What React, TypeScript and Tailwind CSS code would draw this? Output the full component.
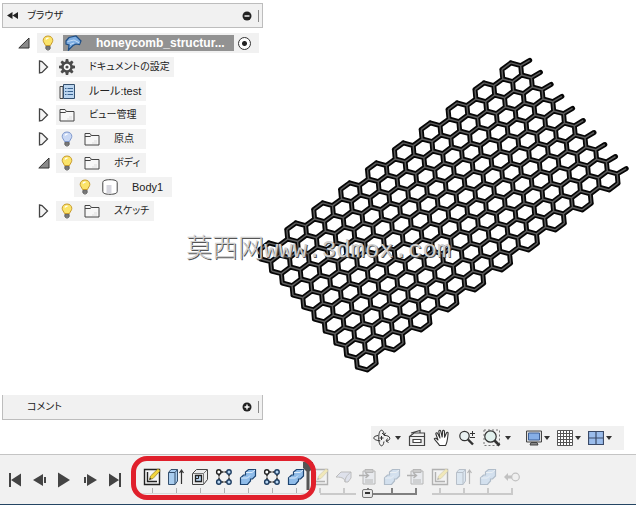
import React from "react";

const Bulb = ({ off = false }: { off?: boolean }) => (
  <svg width="14" height="16" viewBox="0 0 14 16" className="shrink-0">
    <path
      d="M7 1C4 1 2.2 3 2.2 5.4c0 2 1.6 3 2.3 5.1h5c.7-2.100 2.300-3.100 2.300-5.100C11.800 3 10 1 7 1z"
      fill={off ? "#c9d8f4" : "#fbe46a"}
      stroke={off ? "#7d97cc" : "#c79a2c"}
    />
    <path d="M5 4.500c.5-1 1.500-1.500 2.500-1.300" stroke="#fff" strokeWidth="1.400" fill="none" />
    <path d="M4.800 11.500h4.400v2L8 15H6l-1.200-1.500z" fill="#9a9a9a" stroke="#555" strokeWidth=".8" />
    <path d="M5 13h4" stroke="#444" strokeWidth=".8" />
  </svg>
);

const Folder = () => (
  <svg width="16" height="14" viewBox="0 0 16 14" className="shrink-0">
    <path d="M1 13V1.500h5l1.500 2H15V13zM1 4.500h5l1.500-1" fill="#f7f7f7" stroke="#444" />
    <path d="M8 11h5M10 9h3" stroke="#ddd" />
  </svg>
);

const Gear = () => (
  <svg width="16" height="16" viewBox="-8 -8 16 16" className="shrink-0">
    {[0, 45, 90, 135, 180, 225, 270, 315].map((a) => (
      <path key={a} d="M-1.700-5L-1.200-8h2.400L1.700-5z" fill="#4b4b4b" transform={`rotate(${a})`} />
    ))}
    <circle r="4.500" fill="#fff" stroke="#4b4b4b" strokeWidth="2.400" />
    <circle r="1.600" fill="#4b4b4b" />
  </svg>
);

const Rules = () => (
  <svg width="16" height="15" viewBox="0 0 16 15" className="shrink-0">
    <path d="M1 14.500V2.500h3v12z" fill="#eee" stroke="#444" />
    <path d="M4.500.5h11v14h-11z" fill="#bcd6f0" stroke="#35506e" />
    <path d="M6 4.500h1.500m1 0h5.500M6 7.500h1.500m1 0h5.500M6 10.500h1.500m1 0h5.500" stroke="#3a6390" />
  </svg>
);

const Cylinder = () => (
  <svg width="16" height="16" viewBox="0 0 16 16" className="shrink-0">
    <path d="M.8 3.500C.8 1.500 4 .7 8 .7s7.200.8 7.200 2.800v9c0 2-3.200 2.800-7.200 2.800S.8 14.500.8 12.500z" fill="#fff" stroke="#444" />
    <path d="M4.500 6h5v8h-5z" fill="#d6d6de" />
  </svg>
);

const DocIcon = () => (
  <svg width="17" height="16" viewBox="0 0 17 16" className="shrink-0">
    <path d="M1 6l3-3.500L11 1l5 5-1.500 3.500L11 9l-3 1.500L3.500 15 4 10 1 9z" fill="#7eaee3" stroke="#1f4f86" strokeWidth="1.200" />
    <path d="M2.500 6.500L9 5l5.500 3M5 9.500L9 8" stroke="#c5dcf4" fill="none" />
  </svg>
);

const Expander = ({ open }: { open?: boolean }) =>
  open ? (
    <svg width="12" height="12" viewBox="0 0 12 12">
      <path d="M11 1v10H.8z" fill="#8a8a8a" stroke="#333" />
    </svg>
  ) : (
    <svg width="12" height="14" viewBox="0 0 12 14">
      <path d="M1.500 1l2.500.5 5.500 5.500-5.500 5.500-2.500.5z" fill="#f4f4f4" stroke="#444" strokeWidth="1.300" />
    </svg>
  );

const PlusMinus = ({ plus }: { plus?: boolean }) => (
  <svg width="10" height="10" viewBox="0 0 10 10">
    <circle cx="5" cy="5" r="4.500" fill="#222" />
    <path d={plus ? "M2.500 5h5M5 2.500v5" : "M2.500 5h5"} stroke="#fff" strokeWidth="1.400" />
  </svg>
);

const Caret = () => (
  <svg width="6" height="4" viewBox="0 0 6 4" className="shrink-0">
    <path d="M0 0h6L3 4z" fill="#333" />
  </svg>
);

type Row = {
  label: string;
  indent: string;
  width: string;
  text: string;
  state?: "open" | "closed";
  bulb?: "on" | "off";
  icon: React.ReactNode;
};

const rows: Row[] = [
  { label: "ドキュメントの設定", indent: "pl-9", width: "w-[118px]", text: "text-[10px]", state: "closed", icon: <Gear /> },
  { label: "ルール:test", indent: "pl-9", width: "w-[90px]", text: "text-[11px]", icon: <Rules /> },
  { label: "ビュー管理", indent: "pl-9", width: "w-[90px]", text: "text-[10px]", state: "closed", icon: <Folder /> },
  { label: "原点", indent: "pl-9", width: "w-[90px]", text: "text-[10px]", state: "closed", bulb: "off", icon: <Folder /> },
  { label: "ボディ", indent: "pl-9", width: "w-[90px]", text: "text-[10px]", state: "open", bulb: "on", icon: <Folder /> },
  { label: "Body1", indent: "pl-[54px]", width: "w-[98px]", text: "text-[11px]", bulb: "on", icon: <Cylinder /> },
  { label: "スケッチ", indent: "pl-9", width: "w-[98px]", text: "text-[10px]", state: "closed", bulb: "on", icon: <Folder /> },
];

const U = [18.8, -4];
const V = [10.72, 12.03];

function latticePath() {
  const seen = new Set<string>();
  let d = "";
  const corners = [
    [(U[0] + V[0]) / 3, (U[1] + V[1]) / 3],
    [(2 * V[0] - U[0]) / 3, (2 * V[1] - U[1]) / 3],
    [(V[0] - 2 * U[0]) / 3, (V[1] - 2 * U[1]) / 3],
    [-(U[0] + V[0]) / 3, -(U[1] + V[1]) / 3],
    [-(2 * V[0] - U[0]) / 3, -(2 * V[1] - U[1]) / 3],
    [-(V[0] - 2 * U[0]) / 3, -(V[1] - 2 * U[1]) / 3],
  ];
  for (let c = 0; c < 19; c++) {
    const odd = c % 2;
    for (let r = 0; r < (odd ? 9 : 10); r++) {
      const x = 269.8 + c * 13.44 + (odd ? V[0] / 2 : 0) + r * V[0];
      const y = 252.3 - c * 10 + (odd ? V[1] / 2 : 0) + r * V[1];
      corners.forEach((p, i) => {
        const q = corners[(i + 1) % 6];
        const key = `${Math.round((2 * x + p[0] + q[0]) / 4)},${Math.round((2 * y + p[1] + q[1]) / 4)}`;
        if (seen.has(key)) return;
        seen.add(key);
        d += `M${(x + p[0]).toFixed(1)} ${(y + p[1]).toFixed(1)}L${(x + q[0]).toFixed(1)} ${(y + q[1]).toFixed(1)}`;
      });
      if (c === 18) {
        d += `M${(x + 9).toFixed(1)} ${(y - 6.7).toFixed(1)}L${(x + 18).toFixed(1)} ${(y - 12).toFixed(1)}`;
      }
    }
  }
  return d;
}

const lattice = latticePath();

const SketchIcon = () => (
  <svg width="18" height="18" viewBox="0 0 18 18">
    <path d="M1.500 1.500h15v15h-15z" fill="#f5f5f5" stroke="#222" strokeWidth="1.400" />
    <path d="M4.500 4v9.500H14" stroke="#222" strokeWidth="1.400" fill="none" />
    <path d="M6.500 11.500l1-3.500L15 .8l2.200 2L10 10.500z" fill="#f4d63c" stroke="#8d7a21" strokeWidth=".7" />
    <path d="M6.200 12l.8-2.500 1.500 1.500z" fill="#333" />
  </svg>
);
const ExtrudeIcon = () => (
  <svg width="18" height="18" viewBox="0 0 18 18">
    <path d="M1.500 4.500l2.500-3h6.500v11.500l-2.500 3.500H1.500z" fill="#a9cdef" stroke="#35506e" />
    <path d="M1.500 4.500H8v12M8 4.500l2.500-3" stroke="#35506e" fill="none" />
    <path d="M14.500 16V2M12.500 5l2-3 2 3" stroke="#333" strokeWidth="1.200" fill="none" />
  </svg>
);
const ShellIcon = () => (
  <svg width="18" height="18" viewBox="0 0 18 18">
    <path d="M1.500 5.500l4-4h11v10l-4 5h-11z" fill="#ececec" stroke="#444" />
    <path d="M1.500 5.500h11v11M12.500 5.500l4-4" stroke="#777" fill="none" />
    <path d="M4.500 7.500h6v6h-6z" fill="#b8d5f1" stroke="#222" strokeWidth="1.300" />
    <path d="M7.500 7.500v3h-3" stroke="#222" fill="none" />
  </svg>
);
const PatternIcon = () => (
  <svg width="18" height="18" viewBox="0 0 18 18">
    <path d="M6 4h6M4 6v6M6 14h6M14 6v6" stroke="#222" strokeWidth="1.500" strokeDasharray="2.500 1" />
    <circle cx="3.800" cy="4" r="2.200" fill="#fff" stroke="#222" strokeWidth="1.400" />
    {[[14, 4], [3.8, 14], [14, 14]].map(([x, y]) => (
      <circle key={`${x}-${y}`} cx={x} cy={y} r="2.200" fill="#b8d5f1" stroke="#1d3c60" strokeWidth="1.400" />
    ))}
  </svg>
);
const CombineIcon = () => (
  <svg width="18" height="18" viewBox="0 0 18 18">
    <path d="M1.500 10l3-3h2V4l3-2.500h7v6.500l-3 3h-2V13l-3 3.500h-7z" fill="#8fbce9" stroke="#1d4470" strokeWidth="1.200" />
    <path d="M2 10h6.500l2.500-2.500M7 4.500h6l3-2.500" stroke="#dcebfa" fill="none" />
  </svg>
);
const FilletIcon = () => (
  <svg width="18" height="18" viewBox="0 0 18 18">
    <path d="M1 9l5-5h10v6l-3 4h-3c0-3-2-5-9-5z" fill="#b3bfe0" stroke="#444" />
    <path d="M10 14c0-4 2-7 6-10" stroke="#444" fill="none" />
  </svg>
);
const PasteIcon = () => (
  <svg width="18" height="18" viewBox="0 0 18 18">
    <path d="M4 3h12v13H4z" fill="#d6dde8" stroke="#333" />
    <path d="M6 1.500h8v3H6zM6 12h8M6 14h8" fill="#777" stroke="#333" />
    <path d="M0 7.500h9M6.500 5l3 2.500-3 2.500" stroke="#222" strokeWidth="1.400" fill="none" />
  </svg>
);
const MoveIcon = () => (
  <svg width="18" height="18" viewBox="0 0 18 18">
    <path d="M1 9l4-4v2.500h5v3H5V13z" fill="#555" />
    <circle cx="12.500" cy="9" r="3.800" fill="#eee" stroke="#555" strokeWidth="1.200" />
  </svg>
);

const applied = [
  { name: "Sketch 1", Icon: SketchIcon },
  { name: "Extrude 1", Icon: ExtrudeIcon },
  { name: "Shell", Icon: ShellIcon },
  { name: "Pattern 1", Icon: PatternIcon },
  { name: "Combine 1", Icon: CombineIcon },
  { name: "Pattern 2", Icon: PatternIcon },
  { name: "Combine 2", Icon: CombineIcon },
];

const light = "bg-[#cacaca]";
const dark = "bg-[#808080]";
const pending = [
  { name: "Sketch 2", Icon: SketchIcon, tone: light, span: "w-1/2 self-end" },
  { name: "Fillet", Icon: FilletIcon, tone: light, span: "w-full" },
  { name: "Copy", Icon: PasteIcon, tone: dark, span: "w-1/2 self-end" },
  { name: "Combine 3", Icon: CombineIcon, tone: dark, span: "w-full" },
  { name: "Paste", Icon: PasteIcon, tone: dark, span: "w-[13px] self-start" },
  { name: "Sketch 3", Icon: SketchIcon, tone: light, span: "w-5 self-end" },
  { name: "Extrude 2", Icon: ExtrudeIcon, tone: light, span: "w-full" },
  { name: "Combine 4", Icon: CombineIcon, tone: light, span: "w-full" },
  { name: "Move", Icon: MoveIcon, tone: light, span: "w-[13px] self-start" },
];

const playback = [
  { name: "First", d: "M2 1h2v14H2zM14 1.500v13L4 8z" },
  { name: "Step back", d: "M11 2v12L1 8zM12 5h2v6h-2z" },
  { name: "Play", d: "M1 .5v15L13 8z" },
  { name: "Step forward", d: "M5 2v12l10-6zM2 5h2v6H2z" },
  { name: "Last", d: "M12 1h2v14h-2zM2 1.500v13L12 8z" },
];

const OrbitIcon = () => (
  <svg width="18" height="18" viewBox="0 0 18 18" fill="none" stroke="#333">
    <path d="M5 6.500C2 7 .8 7.800.8 8.900c0 1.600 3 2.700 6.500 2.900M14 12c1.800-.6 2.800-1.500 2.800-2.700 0-1.800-2.500-2.900-6-3" />
    <path d="M11 12.500c-.5 3-1.300 4.300-2.500 4.300-1.700 0-2.800-3.500-2.800-8 0-4.300 1.100-7.600 2.800-7.600 1.300 0 2.300 1.800 2.700 4.500" />
    <path d="M9 4l2.200 2 1.500-2.200M8.500 7v4M6.500 9h4M14.500 9.500L13 12l2.500 1.500" />
  </svg>
);
const LookIcon = () => (
  <svg width="18" height="18" viewBox="0 0 18 18" fill="#eee" stroke="#444" strokeWidth="1.200">
    <path d="M1.500 7.500h15v9h-15z" />
    <path d="M5 10.500h8v3H5z" fill="#fff" />
    <path d="M1.500 7.500L6 4h10.500v3.500M3 4l9-2.500V4" fill="none" />
  </svg>
);
const HandIcon = () => (
  <svg width="18" height="18" viewBox="0 0 18 18" fill="#fff" stroke="#333" strokeWidth="1.100" strokeLinejoin="round">
    <path d="M6.500 16.500C5 14 2 11.500 1.300 9.800c.6-1 1.800-.7 3.700 1.200L2.800 4.800c0-1.200 1.400-1.400 1.900-.3L7 9 5.800 2.300c.1-1.300 1.600-1.300 1.900-.1L9.200 8l.4-6c.3-1.100 1.700-1 1.800.1l.2 6.200 1.900-4.500c.6-.9 1.700-.5 1.600.6-.5 4.600-.6 9-2.600 12.100z" />
  </svg>
);
const ZoomIcon = () => (
  <svg width="18" height="18" viewBox="0 0 18 18" fill="none" stroke="#333">
    <circle cx="6.500" cy="7" r="4.700" fill="#e9f1f2" strokeWidth="1.200" />
    <path d="M10 10.500l5 5" strokeWidth="2.400" />
    <path d="M12 4.500h5M14.500 2v5M12 8.500h5" />
  </svg>
);
const FitIcon = () => (
  <svg width="18" height="18" viewBox="0 0 18 18" fill="none" stroke="#333">
    <path d="M1 1h15.500v15.500H1z" stroke="#777" strokeDasharray="2 2" />
    <circle cx="7.500" cy="7.500" r="5.700" fill="#e1f0ed" strokeWidth="1.200" />
    <path d="M11.500 11.500l5 5" strokeWidth="2.600" />
  </svg>
);
const DisplayIcon = () => (
  <svg width="16" height="16" viewBox="0 0 16 16" fill="#ddd" stroke="#444">
    <path d="M.5 1h15v11H.5z" />
    <path d="M2.500 3h11v7h-11z" fill="#86aee6" stroke="#3c5f96" />
    <path d="M5 12.500h6l1 2.500H4z" fill="#888" />
  </svg>
);
const GridIcon = () => (
  <svg width="16" height="16" viewBox="0 0 16 16" fill="#fff" stroke="#555">
    <path d="M.5.5h15v15H.5zM3.500 0v16M6.500 0v16M9.500 0v16M12.500 0v16M0 3.500h16M0 6.500h16M0 9.500h16M0 12.500h16" />
  </svg>
);
const ViewportsIcon = () => (
  <svg width="16" height="14" viewBox="0 0 16 14" fill="#9bbdec" stroke="#3a4a68">
    <path d="M.5.5h15v13H.5zM8 0v14M0 7h16" strokeWidth="1.200" />
  </svg>
);

function ToolButton({ label, gap = "gap-1", caret, children }: { label: string; gap?: string; caret?: boolean; children: React.ReactNode }) {
  return (
    <button type="button" aria-label={label} className={`flex items-center ${gap}`}>
      {children}
      {caret && <Caret />}
    </button>
  );
}

function PanelBar({ title, plus }: { title: string; plus?: boolean }) {
  return (
    <div className={`flex h-[25px] items-center border border-[#bdbdbd] bg-[#f1f1f1] pr-px pl-1 text-[10px] ${plus ? "border-t-0" : ""}`}>
      <span className="flex w-5">
        {!plus && (
          <svg width="11" height="7" viewBox="0 0 11 7">
            <path d="M5.500 0v7L0 3.500zM11 0v7L5.500 3.500z" fill="#222" />
          </svg>
        )}
      </span>
      <h2 className="flex-1">{title}</h2>
      <button type="button" aria-label={title} className="mr-1.5">
        <PlusMinus plus={plus} />
      </button>
      <span className="h-3 w-[3px] border-l border-[#888888]" />
    </div>
  );
}

export default function App() {
  return (
    <div className="flex min-h-screen flex-col bg-white font-['Liberation_Sans','Noto_Sans_CJK_JP',sans-serif] text-[11px] leading-4 text-[#222222]">
      <main className="relative flex flex-1">
        <aside className="flex w-[263px] shrink-0 flex-col pt-[3px] pb-[34px] pl-0.5 [font-feature-settings:'palt']">
          <PanelBar title="ブラウザ" />
          <div className="mt-[5px] flex h-5 items-center pr-1 pl-4">
            <button type="button" aria-label="Collapse" className="w-[19px]">
              <Expander open />
            </button>
            <div className="flex h-full flex-1 items-center bg-[#f1f1f1] pl-1">
              <Bulb />
              <div className="ml-2 flex h-4 w-[171px] items-center bg-[#929292] pl-0.5 text-[12px] font-bold text-white">
                <DocIcon />
                <span className="ml-[14px]">honeycomb_structur...</span>
              </div>
              <label className="ml-1 flex">
                <input
                  type="radio"
                  defaultChecked
                  aria-label="Activate"
                  className="size-[13px] appearance-none rounded-full border border-[#333333] bg-[radial-gradient(circle,#222_2px,#fff_3px)]"
                />
              </label>
            </div>
          </div>
          <ul className="mt-1 flex flex-1 flex-col gap-1">
            {rows.map((row) => (
              <li key={row.label} className={`flex h-5 items-center ${row.indent}`}>
                <span className="flex w-[18px]">
                  {row.state && (
                    <button type="button" aria-label={row.label}>
                      <Expander open={row.state === "open"} />
                    </button>
                  )}
                </span>
                <div className={`flex h-full items-center whitespace-nowrap bg-[#f2f2f2] ${row.width} ${row.text} ${row.bulb ? "gap-2.5 pl-1" : "gap-[14px] pl-[3px]"}`}>
                  {row.bulb && <Bulb off={row.bulb === "off"} />}
                  {row.icon}
                  <span className={row.bulb ? "ml-1" : ""}>{row.label}</span>
                </div>
              </li>
            ))}
          </ul>
          <PanelBar title="コメント" plus />
        </aside>

        <section className="flex min-w-0 flex-1 flex-col justify-between pb-1">
          <svg width="373" height="420" viewBox="263 0 373 420" className="overflow-visible">
            <path d={lattice} stroke="#060606" strokeWidth="5" strokeLinecap="round" fill="none" />
            <path d={lattice} stroke="#5c5c5c" strokeWidth="1.500" fill="none" />
          </svg>
          <div className="mr-3 flex h-6 w-[253px] items-center gap-[7px] self-end bg-[#f1f1f1] pl-0.5">
            <ToolButton label="Orbit" caret><OrbitIcon /></ToolButton>
            <ToolButton label="Look at"><LookIcon /></ToolButton>
            <ToolButton label="Pan"><HandIcon /></ToolButton>
            <ToolButton label="Zoom"><ZoomIcon /></ToolButton>
            <ToolButton label="Fit" caret><FitIcon /></ToolButton>
            <span className="w-px" />
            <ToolButton label="Display" gap="gap-0.5" caret><DisplayIcon /></ToolButton>
            <ToolButton label="Grid" gap="gap-0.5" caret><GridIcon /></ToolButton>
            <ToolButton label="Viewports" gap="gap-0.5" caret><ViewportsIcon /></ToolButton>
          </div>
        </section>

        <p className="pointer-events-none absolute top-[232px] left-[186px] font-['Liberation_Mono','Noto_Sans_CJK_SC',monospace] text-[24px] leading-9 font-light whitespace-nowrap text-[#cfcfcf] [text-shadow:1px_1px_0_#555]">
          <span className="text-[26px]">莫西网</span>www.3dmox.com
        </p>
      </main>

      <footer className="flex h-[51px] items-center border-t border-b border-t-[#c4c4c4] border-b-[#244563] bg-[#f1f1f1] pl-[7px]">
        <div className="flex w-[124px] gap-[9px]">
          {playback.map((p) => (
            <button key={p.name} type="button" aria-label={p.name}>
              <svg width="16" height="16" viewBox="0 0 16 16">
                <path d={p.d} fill="#444" />
              </svg>
            </button>
          ))}
        </div>
        <div className="relative mt-1.5 flex items-start pl-[9px]">
          {applied.map(({ name, Icon }) => (
            <button key={name} type="button" aria-label={name} className="flex h-[30px] w-6 flex-col items-center">
              <Icon />
              <span className="mt-0.5 h-[5px] w-px bg-[#b0b0b0]" />
              <span className="h-px w-full bg-[#d8d8d8]" />
            </button>
          ))}
          {pending.map(({ name, Icon, tone, span }) => (
            <button key={name} type="button" aria-label={name} className="relative flex h-[30px] w-6 flex-col items-center">
              <span className="flex opacity-30"><Icon /></span>
              <span className={`mt-0.5 h-[5px] w-0.5 ${tone}`} />
              <span className={`h-0.5 ${span} ${tone}`} />
              {name === "Copy" && (
                <span className="absolute bottom-0 left-1.5 flex h-[9px] w-[11px] items-center justify-center rounded-xs border border-[#777777] bg-[#e8e8e8]">
                  <span className="h-0.5 w-[5px] bg-[#333333]" />
                </span>
              )}
            </button>
          ))}
          <svg width="10" height="30" viewBox="0 0 10 30" className="absolute -top-1.5 left-[172px]">
            <path d="M0 0h10v6L6.500 9.500V28h-3V9.500L0 6z" fill="#555" />
          </svg>
          <span className="pointer-events-none absolute -top-3 left-0 h-11 w-[185px] rounded-[16px] border-[5px] border-[#e0202c]" />
        </div>
      </footer>
    </div>
  );
}
